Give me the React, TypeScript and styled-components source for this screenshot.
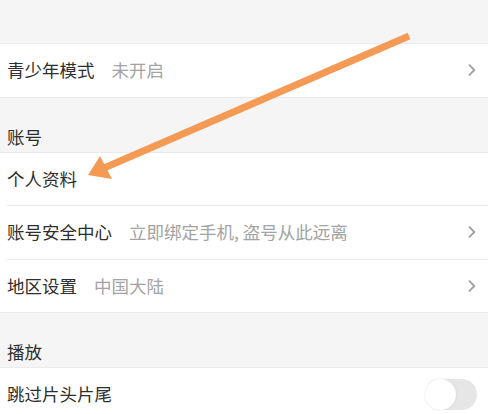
import React from "react";
import styled, { createGlobalStyle } from "styled-components";

const Global = createGlobalStyle`
  html, body { margin: 0; padding: 0; background: #f5f5f5; }
  body { font-family: "Noto Sans CJK SC", "Noto Sans", sans-serif; }
`;

const Page = styled.div`
  position: relative;
  width: 488px;
  height: 414px;
  overflow: hidden;
  background: #f5f5f5;
  padding-top: 43px;
  box-sizing: border-box;
`;

const Group = styled.div`
  background: #fff;
  border-top: 1px solid #ebebeb;
  border-bottom: 1px solid #ebebeb;
`;

const Row = styled.div<{ $divider?: boolean }>`
  position: relative;
  height: 52.5px;
  display: flex;
  align-items: center;
  padding: 0 12px 0 7px;
  box-sizing: border-box;
  ${(p) =>
    p.$divider
      ? `&::after { content: ""; position: absolute; left: 7px; right: 0; bottom: -1px; height: 1px; background: #ebebeb; }
         margin-bottom: 1px;`
      : ""}
`;

const Label = styled.span`
  font-size: 17.5px;
  color: #2e2e2e;
  line-height: 24px;
`;

const Value = styled.span`
  font-size: 17.5px;
  color: #a3a3a3;
  line-height: 24px;
  margin-left: 17px;
  flex: 1;
`;

const Spacer = styled.span`
  flex: 1;
`;

const Header = styled.div`
  height: 54px;
  display: flex;
  align-items: flex-end;
  padding: 0 0 3px 7px;
  box-sizing: border-box;
  font-size: 17.5px;
  line-height: 24px;
  color: #2e2e2e;
`;

const Toggle = styled.div`
  width: 52px;
  height: 31px;
  border-radius: 16px;
  background: #e6e6e6;
  position: relative;
  margin-right: -1px;
  &::before {
    content: "";
    position: absolute;
    left: 0;
    top: 0;
    width: 31px;
    height: 31px;
    border-radius: 50%;
    background: #fff;
    box-shadow: 0 0 2px rgba(0, 0, 0, 0.12);
  }
`;

const Overlay = styled.svg`
  position: absolute;
  left: 0;
  top: 0;
  pointer-events: none;
`;

const Chevron = () => (
  <svg width="8" height="12" viewBox="0 0 8 12">
    <path d="M1.5 1.2 L6.3 6 L1.5 10.8" fill="none" stroke="#a0a0a0" strokeWidth="1.8" strokeLinecap="round" strokeLinejoin="round" />
  </svg>
);

export default function App() {
  return (
    <>
      <Global />
      <Page>
        <Group>
          <Row>
            <Label>青少年模式</Label>
            <Value>未开启</Value>
            <Chevron />
          </Row>
        </Group>
        <Header>账号</Header>
        <Group>
          <Row $divider>
            <Label>个人资料</Label>
            <Spacer />
          </Row>
          <Row $divider>
            <Label>账号安全中心</Label>
            <Value>立即绑定手机, 盗号从此远离</Value>
            <Chevron />
          </Row>
          <Row>
            <Label>地区设置</Label>
            <Value>中国大陆</Value>
            <Chevron />
          </Row>
        </Group>
        <Header>播放</Header>
        <Group>
          <Row>
            <Label>跳过片头片尾</Label>
            <Spacer />
            <Toggle />
          </Row>
        </Group>
        <Overlay width="488" height="414" viewBox="0 0 488 414">
          <line x1="409" y1="36" x2="104" y2="168" stroke="#f59a55" strokeWidth="7" strokeLinecap="butt" />
          <polygon points="88,175 100,156 112,179" fill="#f59a55" />
        </Overlay>
      </Page>
    </>
  );
}
